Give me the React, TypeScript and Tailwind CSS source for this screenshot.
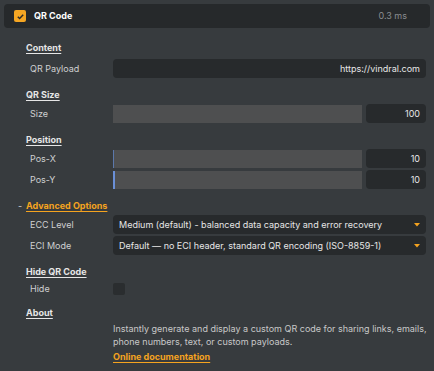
import React from "react";

const font = { fontFamily: "Inter, 'Noto Sans', sans-serif" };

const Heading: React.FC<{ children: React.ReactNode; className?: string }> = ({ children, className }) => (
  <div className={"pl-[26px] h-[14px] flex items-center text-[9px] font-bold text-[#e6e6e6] " + (className ?? "mt-[10px] mb-[2px]")}>
    <span className="underline underline-offset-2">{children}</span>
  </div>
);

const Row: React.FC<{ label: string; children: React.ReactNode }> = ({ label, children }) => (
  <div className="flex items-center h-[19px] mb-[2px]">
    <div className="w-[113px] pl-[30px] text-[9px] text-[#cfd0d1]">{label}</div>
    <div className="flex-1 flex items-center gap-[4px] pr-[8px] h-full">{children}</div>
  </div>
);

const Slider: React.FC<{ value: number; fill: number; bright?: boolean }> = ({ value, fill, bright }) => (
  <>
    <div className="flex-1 h-[18px] bg-[#4e4f50] relative">
      <div
        className={"absolute left-0 top-0 h-full " + (bright ? "bg-[#6a8fd6]" : "bg-[#5b78ab]")}
        style={{ width: fill }}
      />
    </div>
    <div className="w-[60px] h-full rounded-[4px] bg-[#272a2c] flex items-center justify-end pr-[6px] text-[9px] text-[#e6e6e6]">
      {value}
    </div>
  </>
);

const Select: React.FC<{ text: string }> = ({ text }) => (
  <div className="flex-1 h-full rounded-[4px] bg-[#272a2c] flex items-center justify-between pl-[6px] pr-[6px] text-[9px] text-[#e6e6e6]">
    <span className="whitespace-nowrap">{text}</span>
    <svg width="6" height="4" viewBox="0 0 6 4">
      <path d="M0 0h6L3 3.5z" fill="#f5a31f" />
    </svg>
  </div>
);

export default function App() {
  return (
    <div className="w-[434px] h-[371px] bg-[#373b3e] pt-[4px] overflow-hidden" style={font}>
      <div className="mx-[4px] h-[24px] rounded-[4px] bg-[#26292b] flex items-center px-[10px]">
        <div className="w-[12px] h-[12px] rounded-[2px] bg-[#f5a623] flex items-center justify-center">
          <svg width="9" height="9" viewBox="0 0 10 10">
            <path d="M2 5.2l2 2L8 3" stroke="#2a2a2a" strokeWidth="1.6" fill="none" />
          </svg>
        </div>
        <span className="ml-[8px] text-[9px] font-bold text-white">QR Code</span>
        <span className="ml-auto mr-[13px] text-[9px] text-[#8a8d90]">0.3 ms</span>
      </div>

      <Heading className="mt-[13px] mb-[4px]">Content</Heading>
      <Row label="QR Payload">
        <div className="flex-1 h-full rounded-[4px] bg-[#272a2c] flex items-center justify-end pr-[6px] text-[9px] text-[#e6e6e6]">
          https://vindral.com
        </div>
      </Row>

      <Heading className="mt-[10px] mb-[2px]">QR Size</Heading>
      <Row label="Size">
        <Slider value={100} fill={0} />
      </Row>

      <Heading className="mt-[10px] mb-[2px]">Position</Heading>
      <Row label="Pos-X">
        <Slider value={10} fill={1} />
      </Row>
      <Row label="Pos-Y">
        <Slider value={10} fill={2} bright />
      </Row>

      <div className="pl-[18px] h-[14px] flex items-center text-[9px] font-bold mt-[10px] mb-[2px]">
        <span className="text-[#d0d0d0] w-[8px] font-normal">-</span>
        <span className="text-[#f5a31f] underline underline-offset-2">Advanced Options</span>
      </div>
      <Row label="ECC Level">
        <Select text="Medium (default) - balanced data capacity and error recovery" />
      </Row>
      <Row label="ECI Mode">
        <Select text="Default — no ECI header, standard QR encoding (ISO-8859-1)" />
      </Row>

      <Heading className="mt-[10px] mb-[0px]">Hide QR Code</Heading>
      <Row label="Hide">
        <div className="w-[12px] h-[12px] rounded-[2px] bg-[#2a2d2f]" />
      </Row>

      <Heading className="mt-[8px] mb-[2px]">About</Heading>
      <div className="pl-[113px] pr-[6px] text-[9px] leading-[13px] text-[#c8c8c8]">
        Instantly generate and display a custom QR code for sharing links, emails, phone numbers, text, or custom payloads.
      </div>
      <div className="pl-[113px] mt-[2px] h-[14px] flex items-center text-[9px] font-bold text-[#f5a31f]">
        <span className="underline underline-offset-2">Online documentation</span>
      </div>
    </div>
  );
}
